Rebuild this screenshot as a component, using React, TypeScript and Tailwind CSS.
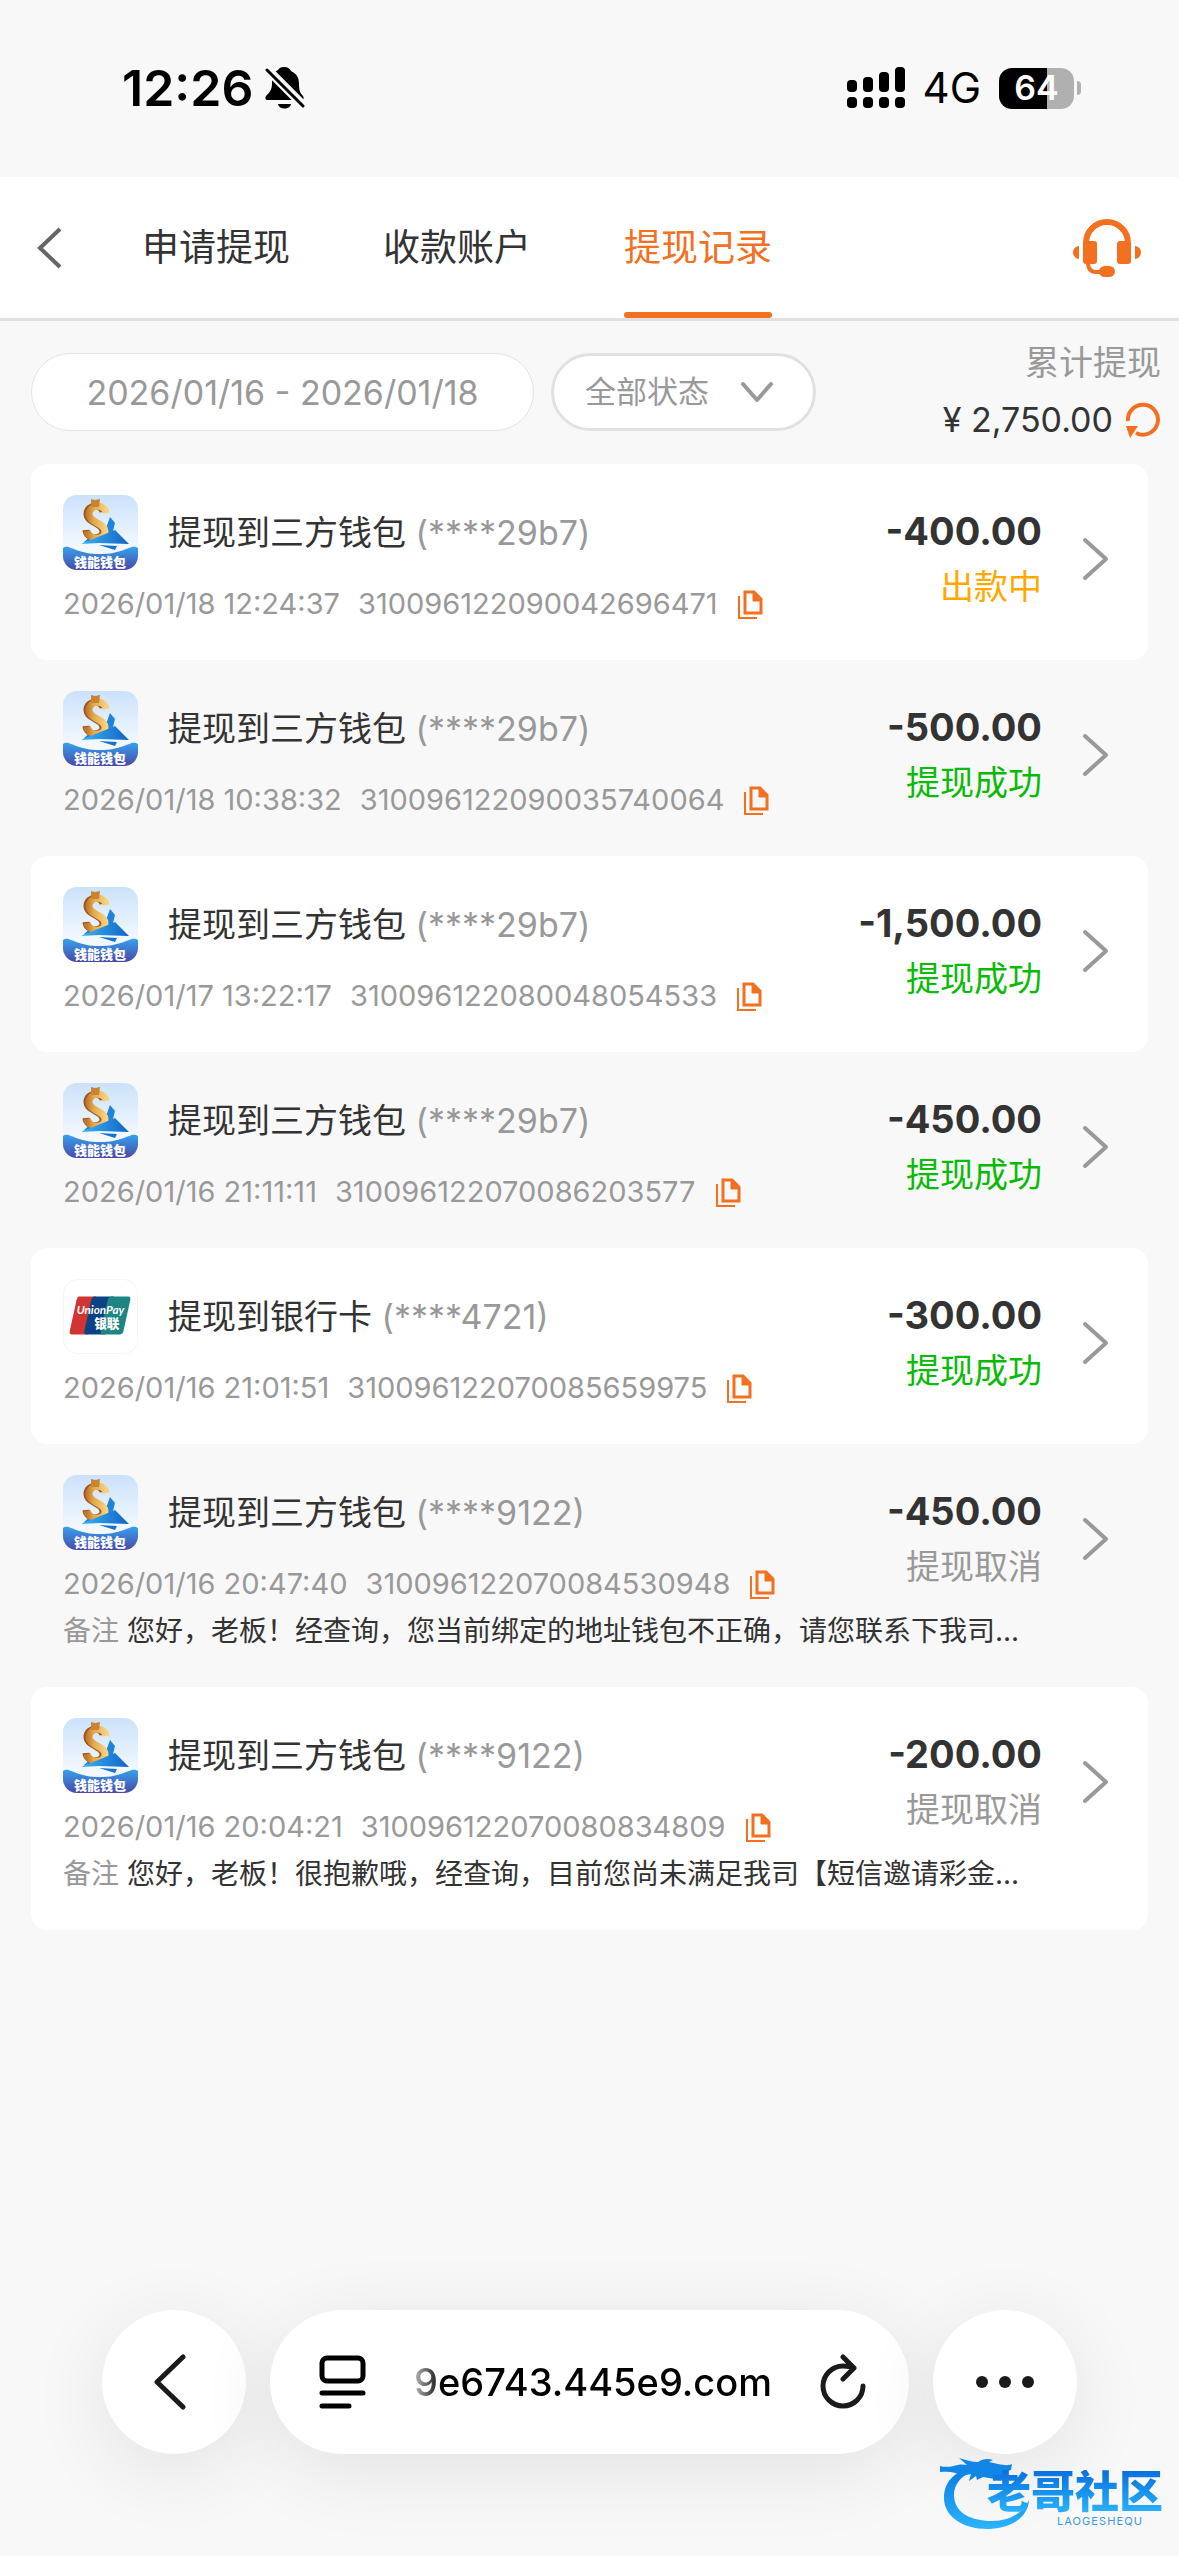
import React, { useState } from 'react'

type Status = 'pending' | 'success' | 'cancelled'

interface WithdrawRecord {
  id: string
  channel: 'wallet' | 'bank'
  title: string
  account: string
  time: string
  amount: string
  status: Status
  remark?: string
}

const TABS = ['申请提现', '收款账户', '提现记录']

const STATUS_INFO: Record<Status, { label: string; color: string }> = {
  pending: { label: '出款中', color: 'text-[#ffa800]' },
  success: { label: '提现成功', color: 'text-[#09bb07]' },
  cancelled: { label: '提现取消', color: 'text-[#999999]' },
}

const RECORDS: WithdrawRecord[] = [
  { id: '310096122090042696471', channel: 'wallet', title: '提现到三方钱包', account: '(****29b7)', time: '2026/01/18 12:24:37', amount: '-400.00', status: 'pending' },
  { id: '310096122090035740064', channel: 'wallet', title: '提现到三方钱包', account: '(****29b7)', time: '2026/01/18 10:38:32', amount: '-500.00', status: 'success' },
  { id: '310096122080048054533', channel: 'wallet', title: '提现到三方钱包', account: '(****29b7)', time: '2026/01/17 13:22:17', amount: '-1,500.00', status: 'success' },
  { id: '310096122070086203577', channel: 'wallet', title: '提现到三方钱包', account: '(****29b7)', time: '2026/01/16 21:11:11', amount: '-450.00', status: 'success' },
  { id: '310096122070085659975', channel: 'bank', title: '提现到银行卡', account: '(****4721)', time: '2026/01/16 21:01:51', amount: '-300.00', status: 'success' },
  {
    id: '310096122070084530948', channel: 'wallet', title: '提现到三方钱包', account: '(****9122)', time: '2026/01/16 20:47:40', amount: '-450.00', status: 'cancelled',
    remark: '您好，老板！经查询，您当前绑定的地址钱包不正确，请您联系下我司...',
  },
  {
    id: '310096122070080834809', channel: 'wallet', title: '提现到三方钱包', account: '(****9122)', time: '2026/01/16 20:04:21', amount: '-200.00', status: 'cancelled',
    remark: '您好，老板！很抱歉哦，经查询，目前您尚未满足我司【短信邀请彩金...',
  },
]

function WalletLogo() {
  return (
    <svg viewBox="0 0 75 75" className="h-[75px] w-[75px] shrink-0 rounded-[14px]" aria-hidden="true">
      <defs>
        <linearGradient id="walletSky" x1="0" y1="0" x2="0" y2="1">
          <stop offset="0" stopColor="#cbe2fb" />
          <stop offset="0.7" stopColor="#f3f8ff" />
        </linearGradient>
        <linearGradient id="walletWave" x1="0" y1="0" x2="0" y2="1">
          <stop offset="0" stopColor="#35a2ee" />
          <stop offset="1" stopColor="#4b48a8" />
        </linearGradient>
        <linearGradient id="walletGold" x1="0" y1="0" x2="1" y2="0">
          <stop offset="0" stopColor="#c07a2c" />
          <stop offset="0.35" stopColor="#e3a94c" />
          <stop offset="1" stopColor="#f8d180" />
        </linearGradient>
        <linearGradient id="walletPlane" x1="0" y1="0" x2="1" y2="0">
          <stop offset="0" stopColor="#38b4f4" />
          <stop offset="1" stopColor="#1263c6" />
        </linearGradient>
      </defs>
      <rect width="75" height="75" fill="url(#walletSky)" />
      <path d="M42 36l5-14 5 6-2 8-8 5zM20 48l10-9 6 4z" fill="#1d83dc" />
      <path d="M40 17c-1-8-16-8-16 2 0 9 17 9 16 18-1 8-16 8-17-2" fill="none" stroke="#a4541c" strokeWidth="7" />
      <path d="M43 18c-1-9-16-9-17 1 0 9 17 9 16 18-1 9-16 8-18-1" fill="none" stroke="url(#walletGold)" strokeWidth="7" />
      <path d="M28 4l4 1 5-1-1 8h-8z" fill="#c8842f" />
      <path d="M18 49l34-14 14 14-30-1z" fill="url(#walletPlane)" />
      <path d="M36 50l18 1-2 4z" fill="#1674cf" />
      <path d="M0 53c6-5 12 6 37 6s31-11 38-6v22H0z" fill="url(#walletWave)" />
      <text x="37" y="72" textAnchor="middle" fontSize="13" fontWeight="900" fill="#fff" fontFamily="Noto Sans CJK SC, sans-serif">钱能钱包</text>
    </svg>
  )
}

function UnionPayLogo() {
  return (
    <svg viewBox="0 0 75 75" className="h-[75px] w-[75px] shrink-0 rounded-[14px] border border-[#f6f6f6] bg-white" aria-hidden="true">
      <path d="M15 17h18L24 56H8q-3 0-2-4l7-32q1-3 2-3z" fill="#d23434" />
      <path d="M31 17h20l-9 39H23q-3 0-2-4l7-32q1-3 3-3z" fill="#0a4485" />
      <path d="M49 17h17q3 0 2 4l-7 32q-1 3-4 3H40q-3 0-2-4l7-32q1-3 4-3z" fill="#1d8583" />
      <text x="13" y="35" fontSize="12" fontWeight="700" fontStyle="italic" fill="#fff" fontFamily="Lato, sans-serif">UnionPay</text>
      <text x="31" y="49" fontSize="13" fontWeight="900" fill="#fff" fontFamily="Noto Sans CJK SC, sans-serif">银联</text>
    </svg>
  )
}

function StatusBar() {
  return (
    <div className="flex h-[177px] items-start justify-between pt-[58px] pr-[98px] pl-[122px] text-black">
      <div className="flex items-center gap-3">
        <span className="text-[50px] leading-[60px] font-semibold">12:26</span>
        <svg viewBox="0 0 40 44" className="h-[44px] w-[40px]" aria-hidden="true">
          <path d="M19 1c4 0 6 2 7 4 6 3 8 7 8 13 0 6 1 9 4 12 1 2 1 4-1 4H3c-3 0-3-2-2-4 3-3 6-6 6-12 0-7 1-12 6-14 1-2 3-3 6-3z" />
          <path d="M13 38h13c-1 6-12 6-13 0z" />
          <path d="M2 3l37 37" stroke="#f8f8f8" strokeWidth="9" />
          <path d="M2 4l36 36" stroke="#000" strokeWidth="3" strokeLinecap="round" />
        </svg>
      </div>
      <div className="flex h-[60px] items-center">
        <svg viewBox="0 0 58 42" className="h-[42px] w-[58px]" aria-hidden="true">
          <rect x="0" y="13" width="10" height="12" rx="4" />
          <rect x="16" y="10" width="10" height="15" rx="4" />
          <rect x="32" y="5" width="10" height="20" rx="4" />
          <rect x="48" y="0" width="10" height="25" rx="4" />
          <rect x="0" y="30" width="10" height="11" rx="4" />
          <rect x="16" y="30" width="10" height="11" rx="4" />
          <rect x="32" y="30" width="10" height="11" rx="4" />
          <rect x="48" y="30" width="10" height="11" rx="4" />
        </svg>
        <span className="ml-[18px] text-[42px] leading-[60px]">4G</span>
        <div className="ml-[18px] flex h-[41px] w-[75px] items-center justify-center rounded-[13px] bg-[linear-gradient(90deg,#000_64%,#b0b0b0_64%)] text-[34px] leading-none font-semibold text-white">64</div>
        <span className="ml-[3px] h-[14px] w-[4px] rounded-r-full bg-[#b0b0b0]" />
      </div>
    </div>
  )
}

function Header() {
  const [active, setActive] = useState(2)

  return (
    <header className="flex h-[144px] items-stretch border-b-[3px] border-[#e1e1e1] bg-white">
      <button type="button" aria-label="返回" className="flex w-[142px] items-center pl-[37px]">
        <svg viewBox="0 0 26 42" className="h-[42px] w-[26px]" fill="none" stroke="#666" strokeWidth="4" aria-hidden="true">
          <path d="M23 2L3 21l20 19" />
        </svg>
      </button>
      <nav className="flex flex-1 gap-[93px]">
        {TABS.map((tab, i) => (
          <button
            key={tab}
            type="button"
            onClick={() => setActive(i)}
            className={`flex flex-col items-center text-[37px] ${i === active ? 'text-[#f37021]' : 'text-[#333333]'}`}
          >
            <span className="flex flex-1 items-center">{tab}</span>
            <span className={`-mt-[6px] h-[6px] w-full rounded-sm ${i === active ? 'bg-[#f37021]' : ''}`} />
          </button>
        ))}
      </nav>
      <button type="button" aria-label="客服" className="flex items-center pr-[38px]">
        <svg viewBox="0 0 68 60" className="h-[60px] w-[68px]" fill="#f37021" aria-hidden="true">
          <path d="M13 27v-2a21 21 0 0 1 42 0v2" fill="none" stroke="#f37021" strokeWidth="6" />
          <rect x="10" y="23" width="14" height="23" rx="3" />
          <rect x="44" y="23" width="14" height="23" rx="3" />
          <path d="M6 28v13c-8-1-8-12 0-13zM62 28v13c8-1 8-12 0-13z" />
          <path d="M15 44c0 7 3 10 8 10h8" fill="none" stroke="#f37021" strokeWidth="4" />
          <rect x="26" y="48" width="16" height="11" rx="6" />
        </svg>
      </button>
    </header>
  )
}

function FilterBar() {
  return (
    <div className="flex h-[143px] items-start pr-[18px] pl-[31px] text-[34px]">
      <button type="button" className="mt-8 h-[78px] w-[503px] rounded-full border border-[#e5e5e5] bg-white text-[#999999]">
        2026/01/16 - 2026/01/18
      </button>
      <div className="relative mt-8 ml-[17px] h-[78px] w-[265px]">
        <select aria-label="状态" className="h-full w-full appearance-none rounded-full border-[3px] border-[#e1e1e1] bg-white pl-[31px] text-[31px] text-[#999999]">
          <option>全部状态</option>
          <option>出款中</option>
          <option>提现成功</option>
          <option>提现取消</option>
        </select>
        <svg viewBox="0 0 34 22" className="pointer-events-none absolute top-[28px] right-[42px] h-[22px] w-[34px]" fill="none" stroke="#999" strokeWidth="4" strokeLinecap="round" strokeLinejoin="round" aria-hidden="true">
          <path d="M3 3l14 16L31 3" />
        </svg>
      </div>
      <div className="ml-auto flex flex-col items-end pt-[15px]">
        <span className="leading-[54px] text-[#999999]">累计提现</span>
        <div className="flex items-center gap-3 leading-[60px] text-[#333333]">
          <span>¥ 2,750.00</span>
          <button type="button" aria-label="刷新">
            <svg viewBox="0 0 36 36" className="h-[36px] w-[36px]" aria-hidden="true">
              <path d="M3 19a15 15 0 1 1 8 12" fill="none" stroke="#f37021" strokeWidth="4" />
              <path d="M1 24h12L5 36z" fill="#f37021" />
            </svg>
          </button>
        </div>
      </div>
    </div>
  )
}

function CopyIcon() {
  return (
    <svg viewBox="0 0 25 29" className="h-[29px] w-[25px]" fill="none" stroke="#f37021" aria-hidden="true">
      <path d="M7 2h9l7 7v14H7z" strokeWidth="3" />
      <path d="M15 1v10h9z" fill="#f37021" strokeWidth="1" />
      <path d="M1 6v22h18" strokeWidth="2" />
    </svg>
  )
}

function RecordCard({ record }: { record: WithdrawRecord }) {
  const status = STATUS_INFO[record.status]

  return (
    <li className="flex rounded-[16px] px-8 pt-[31px] pb-8 odd:bg-white">
      <div className="min-w-0 flex-1">
        <div className="flex items-center gap-[30px]">
          {record.channel === 'wallet' ? <WalletLogo /> : <UnionPayLogo />}
          <h2 className="text-[34px] leading-[75px] text-[#333333]">
            {record.title} <span className="text-[#999999]">{record.account}</span>
          </h2>
        </div>
        <div className="mt-[10px] flex h-[48px] items-center text-[29px] text-[#999999]">
          <span>{record.time}</span>
          <span className="ml-[18px]">{record.id}</span>
          <button type="button" aria-label="复制" className="ml-5">
            <CopyIcon />
          </button>
        </div>
        {record.remark && (
          <p className="h-[47px] text-[28px] leading-[46px] whitespace-nowrap text-[#333333]">
            <span className="text-[#999999]">备注</span> {record.remark}
          </p>
        )}
      </div>
      <div className="flex h-[127px] shrink-0 items-center gap-[38px] pr-[6px]">
        <div className="flex flex-col items-end">
          <span className="text-[38px] leading-[56px] font-bold text-[#333333]">{record.amount}</span>
          <span className={`text-[34px] leading-[56px] ${status.color}`}>{status.label}</span>
        </div>
        <button type="button" aria-label="查看详情">
          <svg viewBox="0 0 30 44" className="h-[44px] w-[30px]" fill="none" stroke="#999" strokeWidth="4" strokeLinecap="round" strokeLinejoin="round" aria-hidden="true">
            <path d="M5 3l21 19L5 41" />
          </svg>
        </button>
      </div>
    </li>
  )
}

function BrowserBar() {
  const glass = 'flex h-[144px] items-center rounded-full bg-white shadow-[0_16px_80px_rgba(0,0,0,0.09)]'

  return (
    <footer className="mt-auto flex gap-6 px-[102px] pb-[102px]">
      <button type="button" aria-label="后退" className={`${glass} w-[144px] justify-center`}>
        <svg viewBox="0 0 32 56" className="mr-2 h-[56px] w-[32px]" fill="none" stroke="#1a1a1a" strokeWidth="5" strokeLinecap="round" strokeLinejoin="round" aria-hidden="true">
          <path d="M29 3L3 28l26 25" />
        </svg>
      </button>
      <div className={`${glass} flex-1 justify-between pr-[43px] pl-[48px]`}>
        <button type="button" aria-label="页面菜单">
          <svg viewBox="0 0 48 54" className="h-[54px] w-[48px]" fill="none" stroke="#000" strokeWidth="5" strokeLinecap="round" aria-hidden="true">
            <rect x="4" y="3" width="41" height="23" rx="5" />
            <path d="M4 38h41M4 51h27" />
          </svg>
        </button>
        <span className="bg-[linear-gradient(90deg,#bbb_0,#000_28px)] bg-clip-text text-[38px] leading-[56px] font-medium text-transparent">9e6743.445e9.com</span>
        <button type="button" aria-label="重新加载">
          <svg viewBox="0 0 46 56" className="h-[56px] w-[46px]" fill="none" stroke="#1a1a1a" strokeWidth="5" strokeLinecap="round" strokeLinejoin="round" aria-hidden="true">
            <path d="M43 32a20 20 0 1 1-20-20c4 0 7 0 11 2M23 3l11 11-11 11" />
          </svg>
        </button>
      </div>
      <button type="button" aria-label="更多" className={`${glass} w-[144px] justify-center`}>
        <svg viewBox="0 0 60 12" className="h-[12px] w-[60px]" fill="#1a1a1a" aria-hidden="true">
          <circle cx="7" cy="6" r="6" />
          <circle cx="30" cy="6" r="6" />
          <circle cx="53" cy="6" r="6" />
        </svg>
      </button>
    </footer>
  )
}

function CommunityBadge() {
  return (
    <div className="absolute right-[16px] bottom-[24px] h-[76px] w-[224px]">
      <svg viewBox="0 0 224 76" className="absolute inset-0 h-full w-full" aria-hidden="true">
        <defs>
          <linearGradient id="dragonBlue" x1="0" y1="0" x2="0" y2="1">
            <stop offset="0" stopColor="#0a7be0" />
            <stop offset="1" stopColor="#2cb4fc" />
          </linearGradient>
        </defs>
        <path d="M32 12C14 16 5 27 5 42c0 18 18 31 44 31 22 0 40-11 41-29-7 14-20 21-37 21-22 0-38-9-38-26 0-10 6-18 17-23z" fill="url(#dragonBlue)" />
        <path d="M1 10c7 2 13 0 18-1 4-1 6 0 9 0l-8-7c7 2 13 4 19 4 4-3 10-4 15-2l-4 2 9 2c6 1 10 2 14 0l-1 6-8 2 7 5-8-1-7 3-12-2-6 3-1-4-7 5 2-7-9 2c-6-4-13-5-22-4z" fill="#1286e6" />
      </svg>
      <div className="absolute top-[14px] right-0 flex flex-col items-end">
        <span className="bg-linear-to-b from-[#0a6fdc] to-[#2cb4fc] bg-clip-text text-[44px] leading-[44px] font-black text-transparent">老哥社区</span>
        <span className="mr-5 text-[11px] leading-[14px] tracking-widest text-[#3a9ae8]">LAOGESHEQU</span>
      </div>
    </div>
  )
}

export default function App() {
  return (
    <div className="relative flex min-h-screen flex-col overflow-hidden bg-[#f8f8f8] font-['Inter','Noto_Sans_CJK_SC',sans-serif]">
      <StatusBar />
      <Header />
      <FilterBar />
      <ul className="mr-[31px] ml-[31px]">
        {RECORDS.map((record) => (
          <RecordCard key={record.id} record={record} />
        ))}
      </ul>
      <BrowserBar />
      <CommunityBadge />
    </div>
  )
}
